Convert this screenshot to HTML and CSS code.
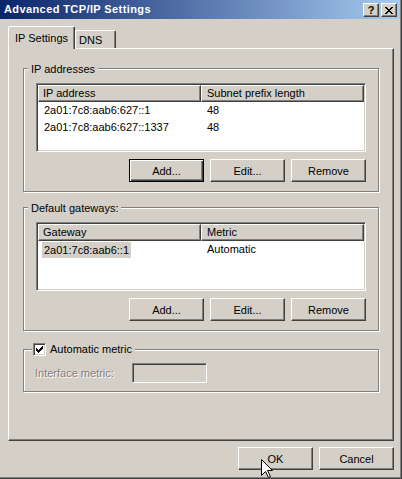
FILE: index.html
```html
<!DOCTYPE html>
<html>
<head>
<meta charset="utf-8">
<title>Advanced TCP/IP Settings</title>
<link rel="stylesheet" href="styles.css">
</head>
<body>
<div class="window">
  <div class="titlebar">
    <span class="title">Advanced TCP/IP Settings</span>
    <div class="caption-btns">
      <span class="cap-btn help">?</span>
      <span class="cap-btn close"><svg width="8" height="7" viewBox="0 0 8 7" shape-rendering="crispEdges"><path fill="#000" d="M0 0h2v1h-2zM6 0h2v1h-2zM1 1h2v1h-2zM5 1h2v1h-2zM2 2h4v1h-4zM3 3h2v1h-2zM2 4h4v1h-4zM1 5h2v1h-2zM5 5h2v1h-2zM0 6h2v1h-2zM6 6h2v1h-2z"/></svg></span>
    </div>
  </div>
  <div class="content">
    <div class="tabs">
      <div class="tab active">IP Settings</div>
      <div class="tab inactive">DNS</div>
    </div>
    <div class="panel">
      <div class="group">
        <span class="legend">IP addresses</span>
        <div class="listview">
          <div class="lv-header">
            <div class="col c1">IP address</div>
            <div class="col c2">Subnet prefix length</div>
          </div>
          <div class="lv-row"><span class="cell c1">2a01:7c8:aab6:627::1</span><span class="cell c2">48</span></div>
          <div class="lv-row"><span class="cell c1">2a01:7c8:aab6:627::1337</span><span class="cell c2">48</span></div>
        </div>
        <div class="btnrow">
          <button class="btn default">Add...</button>
          <button class="btn">Edit...</button>
          <button class="btn">Remove</button>
        </div>
      </div>
      <div class="group gap-gw">
        <span class="legend">Default gateways:</span>
        <div class="listview">
          <div class="lv-header">
            <div class="col c1">Gateway</div>
            <div class="col c2">Metric</div>
          </div>
          <div class="lv-row"><span class="cell c1 sel-cell"><span class="sel">2a01:7c8:aab6::1</span></span><span class="cell c2">Automatic</span></div>
        </div>
        <div class="btnrow">
          <button class="btn">Add...</button>
          <button class="btn">Edit...</button>
          <button class="btn">Remove</button>
        </div>
      </div>
      <div class="group metric">
        <span class="legend check-legend">
          <span class="checkbox"><svg width="7" height="7" viewBox="0 0 7 7" shape-rendering="crispEdges"><path fill="#000" d="M6 0h1v1h-1zM5 1h2v1h-2zM0 2h1v1h-1zM4 2h3v1h-3zM0 3h2v1h-2zM3 3h3v1h-3zM0 4h5v1h-5zM1 5h3v1h-3zM2 6h1v1h-1z"/></svg></span>
          <span>Automatic metric</span>
        </span>
        <div class="metric-row">
          <span class="disabled-label">Interface metric:</span>
          <div class="textbox"></div>
        </div>
      </div>
    </div>
    <div class="dlg-buttons">
      <button class="btn">OK</button>
      <button class="btn">Cancel</button>
    </div>
  </div>
  <svg class="cursor" width="13" height="20" viewBox="0 0 13 20"><polygon points="0.5,0.5 0.5,16.5 4.5,12.5 7.5,18.5 9.5,17.5 6.5,11.5 11.5,11.5" fill="#fff" stroke="#000" stroke-width="1"/></svg>
</div>
</body>
</html>
```
FILE: styles.css
```css
* { box-sizing: border-box; }
html, body { margin: 0; padding: 0; }
body {
  background: #D4D0C8;
  font-family: "Liberation Sans", Arial, sans-serif;
  font-size: 11px;
  color: #000;
}
.window {
  position: relative;
  width: 402px;
  height: 479px;
  background: #D4D0C8;
  border-right: 1px solid #404040;
  border-bottom: 1px solid #404040;
  box-shadow: inset -1px -1px #808080;
  overflow: hidden;
}
.titlebar {
  width: 400px;
  height: 19px;
  background: linear-gradient(to right, #0A246A, #A6CAF0);
  display: flex;
  justify-content: space-between;
  align-items: flex-start;
  padding: 3px 3px 0 4px;
}
.title {
  color: #fff;
  font-weight: bold;
  letter-spacing: 0.4px;
  line-height: 13px;
}
.caption-btns { display: flex; gap: 2px; }
.cap-btn {
  width: 16px;
  height: 14px;
  background: #D4D0C8;
  border: 1px solid;
  border-color: #fff #404040 #404040 #fff;
  box-shadow: inset -1px -1px #808080;
  display: flex;
  align-items: center;
  justify-content: center;
  font-weight: bold;
  font-size: 11px;
  line-height: 12px;
}
.content { padding: 7px 0 0 8px; }
.tabs { display: flex; align-items: flex-end; height: 22px; }
.tab {
  background: #D4D0C8;
  border-top: 1px solid #fff;
  border-left: 1px solid #fff;
  border-right: 1px solid #404040;
  box-shadow: inset -1px 0 #808080;
  border-radius: 2px 2px 0 0;
  line-height: 13px;
}
.tab.active {
  width: 67px;
  height: 23px;
  margin-bottom: -1px;
  position: relative;
  z-index: 1;
  text-align: center;
  padding-top: 5px;
}
.tab.inactive {
  width: 41px;
  height: 18px;
  padding: 3px 0 0 3px;
}
.panel {
  width: 386px;
  height: 393px;
  border: 1px solid;
  border-color: #fff #404040 #404040 #fff;
  box-shadow: inset -1px -1px #808080;
  padding: 19px 0 0 14px;
}
.group {
  position: relative;
  width: 356px;
  border: 1px solid #808080;
  box-shadow: inset 1px 1px #fff, 1px 1px #fff;
  padding: 14px 12px 9px 12px;
}
.gap-gw { margin-top: 15px; }
.legend {
  position: absolute;
  top: -6px;
  left: 4px;
  background: #D4D0C8;
  padding: 0 3px;
  line-height: 13px;
}
.listview {
  width: 330px;
  height: 69px;
  background: #fff;
  border: 1px solid;
  border-color: #808080 #fff #fff #808080;
  box-shadow: inset 1px 1px #404040, inset -1px -1px #D4D0C8;
  padding: 1px;
}
.lv-header { display: flex; height: 17px; }
.col {
  height: 17px;
  background: #D4D0C8;
  border: 1px solid;
  border-color: #fff #404040 #404040 #fff;
  box-shadow: inset -1px -1px #808080;
  line-height: 14px;
}
.col.c1 { width: 163px; padding-left: 4px; }
.col.c2 { width: 163px; padding-left: 5px; }
.lv-row { display: flex; height: 17px; line-height: 17px; }
.cell.c1 { width: 163px; padding-left: 6px; }
.cell.c2 { padding-left: 6px; }
.cell.sel-cell { padding-left: 4px; }
.sel {
  display: inline-block;
  background: #D4D0C8;
  padding: 0 2px;
  line-height: 16px;
  margin-top: 1px;
}
.btnrow {
  display: flex;
  justify-content: flex-end;
  gap: 6px;
  margin-top: 7px;
}
.btn {
  appearance: none;
  width: 75px;
  height: 23px;
  margin: 0;
  padding: 0;
  font-family: inherit;
  font-size: 11px;
  color: #000;
  background: #D4D0C8;
  border: 1px solid;
  border-color: #fff #404040 #404040 #fff;
  box-shadow: inset -1px -1px #808080;
}
.btn.default {
  border-color: #000;
  box-shadow: inset 1px 1px #fff, inset -1px -1px #404040, inset -2px -2px #808080;
}
.metric {
  margin-top: 18px;
  height: 43px;
  padding: 13px 12px 8px 11px;
}
.check-legend {
  top: -7px;
  left: 8px;
  padding: 0 3px 0 1px;
  display: flex;
  align-items: center;
  gap: 4px;
}
.checkbox {
  width: 13px;
  height: 13px;
  background: #fff;
  border: 1px solid;
  border-color: #808080 #fff #fff #808080;
  box-shadow: inset 1px 1px #404040, inset -1px -1px #D4D0C8;
  display: flex;
  padding: 2px 0 0 2px;
}
.metric-row { display: flex; align-items: center; height: 20px; }
.disabled-label {
  width: 97px;
  color: #808080;
  text-shadow: 1px 1px #fff;
}
.textbox {
  width: 75px;
  height: 20px;
  background: #D4D0C8;
  border: 1px solid;
  border-color: #808080 #fff #fff #808080;
  box-shadow: inset 1px 1px #404040, inset -1px -1px #D4D0C8;
}
.dlg-buttons {
  width: 386px;
  display: flex;
  justify-content: flex-end;
  gap: 6px;
  margin-top: 6px;
}
.cursor {
  position: absolute;
  left: 261px;
  top: 459px;
}
```
